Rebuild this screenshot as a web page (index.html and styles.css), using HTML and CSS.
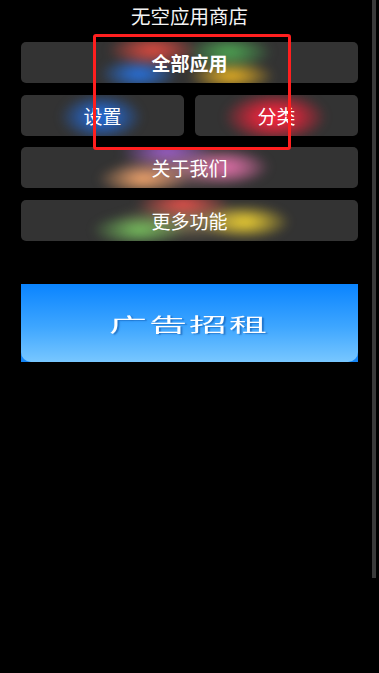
FILE: index.html
```html
<!DOCTYPE html>
<html lang="zh">
<head>
<meta charset="utf-8">
<title>无空应用商店</title>
<link rel="stylesheet" href="styles.css">
</head>
<body>
<div class="page">
  <header class="title">无空应用商店</header>
  <div class="menu">
    <div class="btn glow-all"><span class="label bold">全部应用</span></div>
    <div class="row">
      <div class="btn glow-set"><span class="label">设置</span></div>
      <div class="btn glow-cat"><span class="label">分类</span></div>
    </div>
    <div class="btn glow-about"><span class="label">关于我们</span></div>
    <div class="btn glow-more"><span class="label">更多功能</span></div>
  </div>
  <div class="banner">
    <div class="banner-inner"><span class="banner-text">广告招租</span></div>
  </div>
</div>
<div class="highlight"></div>
<div class="scrollbar"></div>
</body>
</html>
```
FILE: styles.css
```css
html, body {
  margin: 0;
  padding: 0;
  background: #000;
}
body {
  width: 379px;
  height: 673px;
  overflow: hidden;
  position: relative;
  font-family: "Noto Sans CJK SC", "Noto Sans", sans-serif;
  color: #fff;
}
.page {
  padding: 0 21px;
}
.title {
  height: 32px;
  line-height: 32px;
  text-align: center;
  font-size: 19.5px;
  color: #f4f4f4;
}
.menu {
  margin-top: 10px;
  display: flex;
  flex-direction: column;
  gap: 11.6px;
}
.row {
  display: flex;
  gap: 11px;
}
.row .btn {
  flex: 1;
}
.btn {
  position: relative;
  height: 41px;
  background: #333333;
  border-radius: 5px;
  overflow: hidden;
  display: flex;
  align-items: center;
  justify-content: center;
}
.label {
  position: relative;
  z-index: 1;
  font-size: 19px;
  line-height: 1;
  color: #fff;
}
.label.bold {
  font-weight: 700;
}
.btn::before {
  content: "";
  position: absolute;
  inset: -6px;
  filter: blur(4px);
}
.glow-all::before {
  background:
    radial-gradient(ellipse 46px 18px at 138px 14px, rgba(225, 75, 65, 1), rgba(225, 75, 65, 0.65) 40%, rgba(225, 75, 65, 0) 100%),
    radial-gradient(ellipse 44px 18px at 214px 16px, rgba(80, 175, 85, 0.95), rgba(80, 175, 85, 0.6) 40%, rgba(80, 175, 85, 0) 100%),
    radial-gradient(ellipse 40px 17px at 124px 38px, rgba(40, 115, 225, 1), rgba(40, 115, 225, 0.65) 40%, rgba(40, 115, 225, 0) 100%),
    radial-gradient(ellipse 44px 16px at 216px 40px, rgba(235, 180, 35, 1), rgba(235, 180, 35, 0.65) 40%, rgba(235, 180, 35, 0) 100%);
}
.glow-set::before {
  background:
    radial-gradient(ellipse 42px 24px at 86px 28px, rgba(35, 110, 225, 1), rgba(35, 110, 225, 0.7) 40%, rgba(35, 110, 225, 0) 100%);
}
.glow-cat::before {
  background:
    radial-gradient(ellipse 52px 26px at 86px 28px, rgba(255, 35, 60, 1), rgba(255, 35, 60, 0.75) 40%, rgba(255, 35, 60, 0) 100%);
}
.glow-about::before {
  background:
    radial-gradient(ellipse 48px 16px at 152px 10px, rgba(160, 95, 210, 1), rgba(160, 95, 210, 0.6) 40%, rgba(160, 95, 210, 0) 100%),
    radial-gradient(ellipse 46px 17px at 128px 38px, rgba(250, 170, 110, 1), rgba(250, 170, 110, 0.6) 40%, rgba(250, 170, 110, 0) 100%),
    radial-gradient(ellipse 44px 19px at 212px 26px, rgba(225, 110, 170, 1), rgba(225, 110, 170, 0.6) 40%, rgba(225, 110, 170, 0) 100%),
    radial-gradient(ellipse 75px 22px at 174px 27px, rgba(210, 135, 150, 0.7), rgba(210, 135, 150, 0) 100%);
}
.glow-more::before {
  background:
    radial-gradient(ellipse 48px 16px at 168px 10px, rgba(235, 80, 75, 1), rgba(235, 80, 75, 0.6) 40%, rgba(235, 80, 75, 0) 100%),
    radial-gradient(ellipse 48px 17px at 124px 36px, rgba(120, 195, 95, 1), rgba(120, 195, 95, 0.6) 40%, rgba(120, 195, 95, 0) 100%),
    radial-gradient(ellipse 46px 18px at 230px 28px, rgba(240, 210, 50, 1), rgba(240, 210, 50, 0.65) 40%, rgba(240, 210, 50, 0) 100%),
    radial-gradient(ellipse 75px 20px at 174px 27px, rgba(200, 170, 110, 0.6), rgba(200, 170, 110, 0) 100%);
}
.banner {
  margin-top: 43px;
  height: 78px;
  background: #1585f5;
}
.banner-inner {
  height: 100%;
  border-radius: 0 0 10px 10px;
  background: linear-gradient(to bottom, #0a84ff 0%, #3ea6ff 55%, #78c7ff 100%);
  display: flex;
  align-items: center;
  justify-content: center;
}
.banner-text {
  display: inline-block;
  font-size: 19px;
  letter-spacing: 1px;
  color: #fff;
  transform: scaleX(2);
  text-shadow: 1px 1px 1px rgba(0, 60, 140, 0.45);
  margin-top: 2px;
}
.highlight {
  position: absolute;
  left: 93px;
  top: 34px;
  width: 192px;
  height: 110px;
  border: 3px solid #ff1f1f;
  border-radius: 3px;
  z-index: 5;
}
.scrollbar {
  position: absolute;
  left: 372px;
  top: 0;
  width: 4px;
  height: 578px;
  background: #3a3a3a;
}
```
